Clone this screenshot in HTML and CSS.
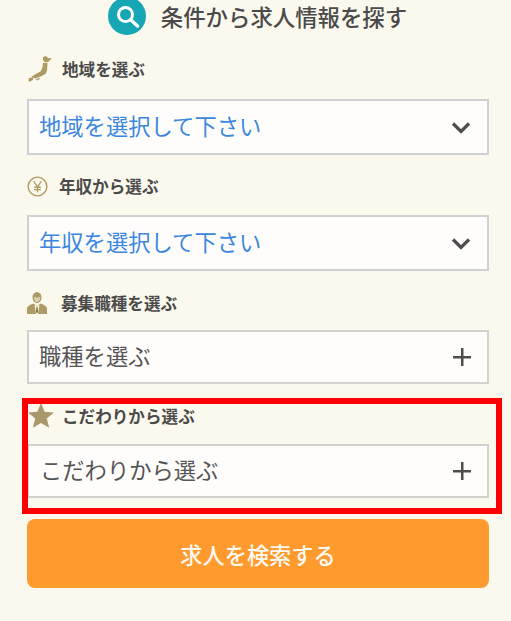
FILE: index.html
```html
<!DOCTYPE html>
<html lang="ja">
<head>
  <meta charset="UTF-8" />
  <meta name="viewport" content="width=device-width, initial-scale=1.0"/>
  <title>条件から求人情報を探す</title>
  <link rel="stylesheet" href="styles.css">
</head>
<body>

  <div class="container">
    <h1 class="title">
      <svg class="title-icon" viewBox="0 0 38 38">
        <circle cx="19" cy="19" r="19" fill="#17a6b4"/>
        <circle cx="17.5" cy="17.5" r="7" fill="none" stroke="#fff" stroke-width="3"/>
        <path d="M23 23l6.5 6" fill="none" stroke="#fff" stroke-width="3.4" stroke-linecap="round"/>
      </svg>
      条件から求人情報を探す
    </h1>

    <section class="field field-area">
      <h2 class="field-label">
        <svg class="icon icon-japan" viewBox="0 0 24 26">
          <path fill="#ae9a63" d="M15 1l3-1 2 2 4 .5-4 3.500-3 .5-2-2.500z"/>
          <path fill="#ae9a63" d="M15 7l4.500 0-.5 7.500-1.500 3.500-6 3-4.500 1.500-4-1.500 5.500-3.500 4-2 2-4z"/>
          <path fill="#ae9a63" d="M1 22l4-.5 0 2.500-4 2-.5-2zM8 23l3.500-1 .5 1-3.500 1.500z"/>
        </svg>
        地域を選ぶ
      </h2>
      <div class="select-box select-blue">
        <span>地域を選択して下さい</span>
        <svg class="chevron" viewBox="0 0 20 13">
          <path d="M2 2.500l8 8 8-8" fill="none" stroke="#4d4d4d" stroke-width="3.200"/>
        </svg>
      </div>
    </section>

    <section class="field field-income">
      <h2 class="field-label">
        <svg class="icon icon-yen" viewBox="0 0 22 22">
          <circle cx="11" cy="11" r="9.800" fill="none" stroke="#ae9a63" stroke-width="1.500"/>
          <path d="M7 5.500l4 6 4-6M11 11.500v5.500M7.500 11.800h7M7.500 14.200h7" fill="none" stroke="#ae9a63" stroke-width="1.400"/>
        </svg>
        年収から選ぶ
      </h2>
      <div class="select-box select-blue">
        <span>年収を選択して下さい</span>
        <svg class="chevron" viewBox="0 0 20 13">
          <path d="M2 2.500l8 8 8-8" fill="none" stroke="#4d4d4d" stroke-width="3.200"/>
        </svg>
      </div>
    </section>

    <section class="field field-job">
      <h2 class="field-label">
        <svg class="icon icon-person" viewBox="0 0 20 22">
          <ellipse cx="10" cy="5.500" rx="4.500" ry="5.500" fill="#ae9a63"/>
          <path fill="#d9cfae" d="M6.800 5c1.500.5 4.500.5 6.400 0 .3 3-1.200 5-3.200 5S6.500 8 6.800 5z"/>
          <path fill="#ae9a63" d="M0 22v-5c0-3 3-4 6.500-5.500L10 14l3.500-2.500C17 13 20 14 20 17v5z"/>
          <path fill="#fbf8ed" d="M7.500 12.500L10 14.500l2.500-2-1.500 9.500H9z"/>
          <path fill="#8f7f50" d="M9.300 15h1.400l.5 5-1.200 1.500L8.800 20z"/>
        </svg>
        募集職種を選ぶ
      </h2>
      <div class="select-box">
        <span>職種を選ぶ</span>
        <span class="plus"></span>
      </div>
    </section>

    <section class="field field-extra">
      <h2 class="field-label">
        <svg class="icon icon-star" viewBox="0 0 26 26">
          <path fill="#a8986a" d="M13 0l3.600 8.800 9.400.7-7.200 6.100 2.300 9.200L13 19.900l-8.100 4.900 2.300-9.200L0 9.500l9.400-.7z"/>
        </svg>
        こだわりから選ぶ
      </h2>
      <div class="select-box">
        <span>こだわりから選ぶ</span>
        <span class="plus"></span>
      </div>
      <div class="highlight"></div>
    </section>

    <button type="button" class="search-btn">求人を検索する</button>
  </div>

</body>
</html>
```

FILE: styles.css
```css
body {
  font-family: "Noto Sans CJK JP", "Noto Sans", sans-serif;
  background: #fbf8ed;
  margin: 0;
  padding: 0;
  color: #4a4a4a;
  overflow: hidden;
}

.container {
  height: 621px;
  padding: 0 22px 0 27px;
  box-sizing: border-box;
  overflow: hidden;
}

.title {
  display: flex;
  align-items: center;
  justify-content: center;
  gap: 15px;
  height: 38px;
  margin: -3px 0 0 0;
  padding-right: 1px;
  font-size: 22.400px;
  font-weight: 500;
  white-space: nowrap;
}

.title-icon {
  width: 38px;
  height: 38px;
  flex: none;
}

.field {
  position: relative;
}

.field-label {
  display: flex;
  align-items: center;
  margin: 0;
  font-size: 16.600px;
  font-weight: 700;
  line-height: 24px;
  white-space: nowrap;
}

.icon {
  flex: none;
}

.field-area {
  margin-top: 20px;
}

.field-area .field-label {
  height: 27px;
  gap: 10px;
  margin-bottom: 17px;
}

.icon-japan {
  width: 24px;
  height: 26px;
  margin-left: 1px;
}

.field-income {
  margin-top: 19px;
}

.field-income .field-label {
  height: 24px;
  gap: 11px;
  margin-bottom: 17px;
}

.icon-yen {
  width: 21px;
  height: 21px;
}

.field-job {
  margin-top: 20px;
}

.field-job .field-label {
  height: 23px;
  gap: 14px;
  margin-bottom: 16px;
}

.icon-person {
  width: 20px;
  height: 22px;
}

.field-extra {
  margin-top: 19px;
}

.field-extra .field-label {
  height: 26px;
  gap: 8px;
  margin-bottom: 15px;
}

.icon-star {
  width: 26px;
  height: 26px;
  margin-left: 1px;
}

.select-box {
  display: flex;
  align-items: center;
  justify-content: space-between;
  height: 56px;
  box-sizing: border-box;
  padding: 0 16px 4px 10px;
  background: #fffdfc;
  border: 2px solid #d3d1cc;
  font-size: 22.300px;
  color: #555;
  white-space: nowrap;
}

.select-blue {
  color: #3a87dd;
  border-color: #cfd0d1;
}

.field-job .select-box,
.field-extra .select-box {
  height: 54px;
}

.field-extra .select-box {
  padding-left: 11px;
}

.chevron {
  width: 20px;
  height: 13px;
  margin-top: 4px;
}

.plus {
  width: 18px;
  height: 18px;
  margin-top: 4px;
  background:
    linear-gradient(#4d4d4d, #4d4d4d) center / 18px 2.500px no-repeat,
    linear-gradient(#4d4d4d, #4d4d4d) center / 2.500px 18px no-repeat;
}

.highlight {
  position: absolute;
  left: -5px;
  right: -13px;
  top: -5px;
  bottom: -16px;
  border: 6px solid #ff0000;
  pointer-events: none;
}

.search-btn {
  display: block;
  width: 100%;
  height: 69px;
  margin-top: 21px;
  padding: 0;
  background: #ff9a2e;
  color: #fff8ee;
  border: none;
  border-radius: 8px;
  font-family: inherit;
  font-size: 22.200px;
  font-weight: 500;
}
```
